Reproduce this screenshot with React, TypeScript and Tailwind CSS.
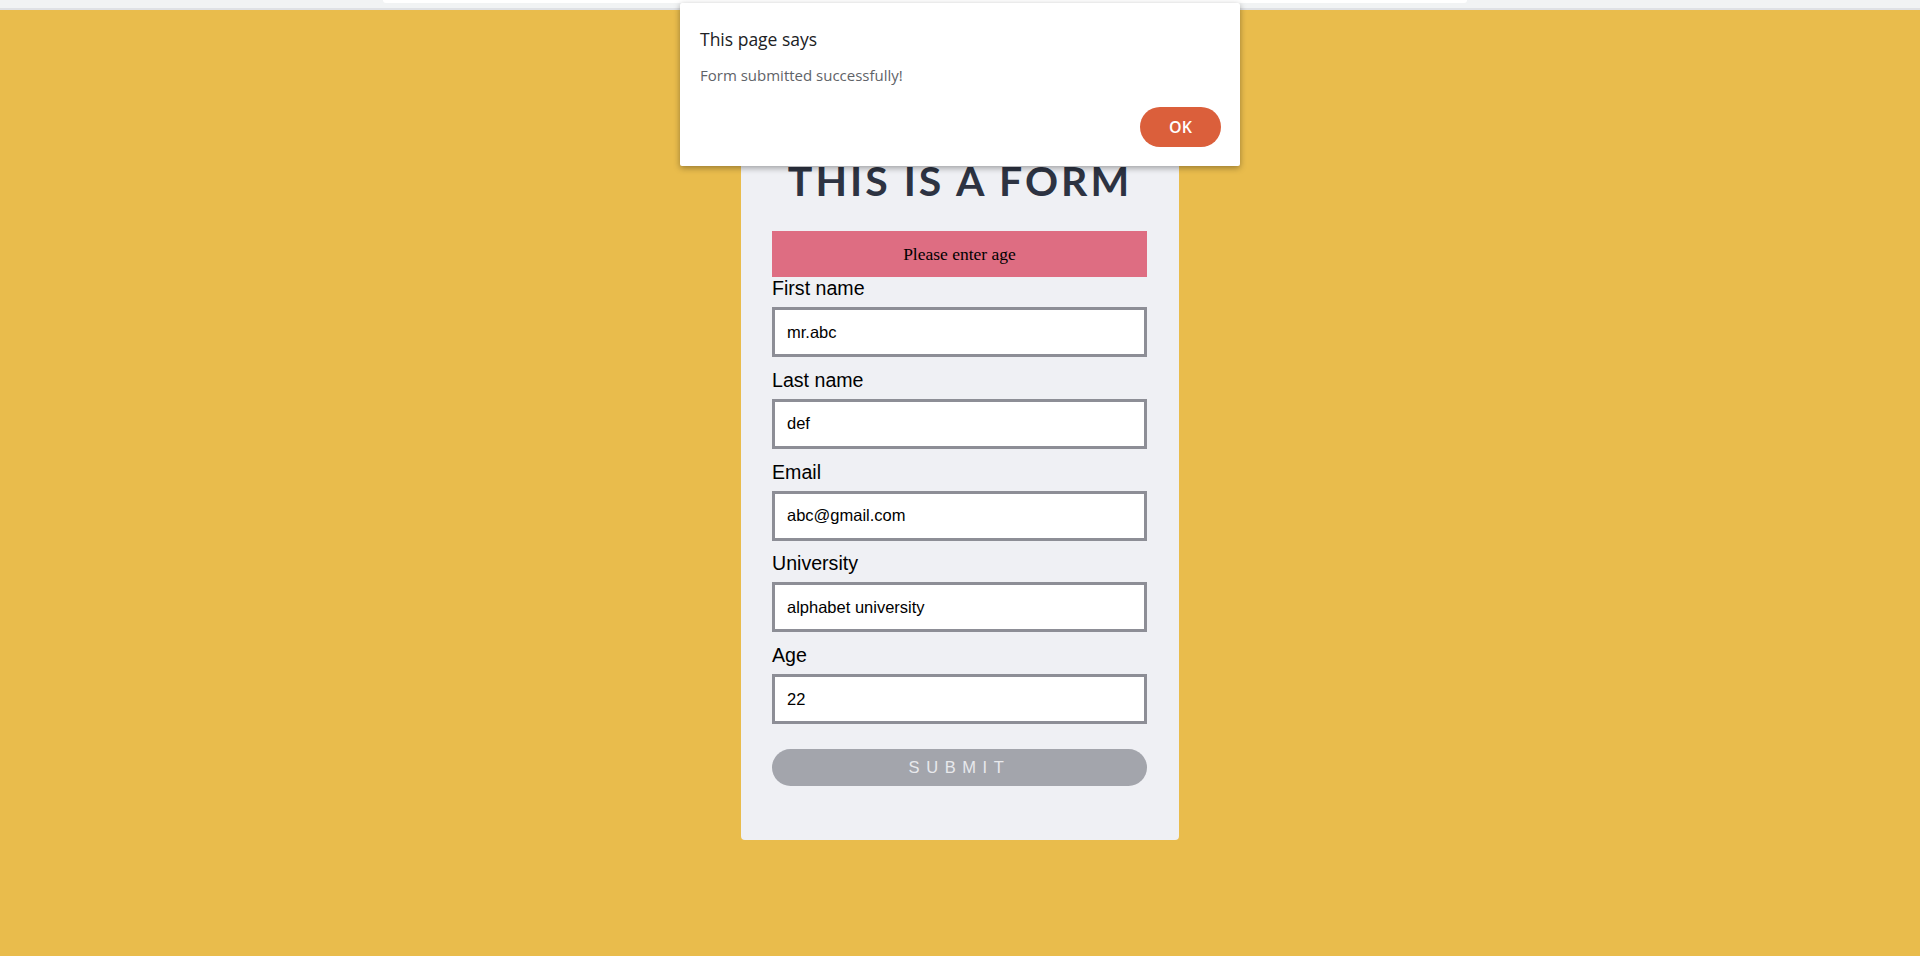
import { useState } from 'react';

interface Field {
  id: string;
  label: string;
  value: string;
}

const fields: Field[] = [
  { id: 'first', label: 'First name', value: 'mr.abc' },
  { id: 'last', label: 'Last name', value: 'def' },
  { id: 'email', label: 'Email', value: 'abc@gmail.com' },
  { id: 'uni', label: 'University', value: 'alphabet university' },
  { id: 'age', label: 'Age', value: '22' },
];

export default function App() {
  const [values, setValues] = useState<Record<string, string>>(
    Object.fromEntries(fields.map((f) => [f.id, f.value]))
  );
  const [showAlert, setShowAlert] = useState(true);

  return (
    <div className="relative min-h-screen w-full flex flex-col bg-[#e9bc4c] font-['Liberation_Sans',Arial,sans-serif]">
      {/* browser strip */}
      <div className="h-[10px] bg-[#f1f3f4] border-b-2 border-[#dfe1e5]">
        <div className="ml-[383px] w-[1084px] h-[3px] bg-white rounded-b-[3px]" />
      </div>

      {/* Form card */}
      <div className="flex justify-center">
        <div className="mt-[100px] w-[438px] bg-[#eff0f4] rounded-[4px] px-[31px] pt-[45px] pb-[54px] flex flex-col">
          <h1 className="text-center font-['Lato',sans-serif] font-bold text-[41px] leading-[52px] tracking-[3px] text-[#2d3342]">
            THIS IS A FORM
          </h1>

          <div className="mt-[24px] h-[46px] w-[375px] bg-[#de6d82] flex items-center justify-center font-['Liberation_Serif','Times_New_Roman',serif] text-[17.5px] text-black pt-[1px]">
            Please enter age
          </div>

          {fields.map((f, i) => (
            <div key={f.id} className={i < fields.length - 1 ? 'mb-[11.75px]' : ''}>
              <label htmlFor={f.id} className="block text-[19.6px] leading-[23px] text-black mb-[7px]">
                {f.label}
              </label>
              <input
                id={f.id}
                type="text"
                value={values[f.id]}
                onChange={(e) => setValues({ ...values, [f.id]: e.target.value })}
                className="block w-[375px] h-[50px] bg-white border-[3px] border-[#8d8e96] pl-[12px] text-[16.5px] text-black outline-none"
              />
            </div>
          ))}

          <button className="mt-[25px] h-[37px] w-[375px] rounded-full bg-[#a3a5ac] text-[#e8e9ec] text-[16.5px] tracking-[0.4em] uppercase">
            Submit
          </button>
        </div>
      </div>

      {/* alert dialog */}
      {showAlert && (
        <div className="absolute left-[680px] top-[3px] w-[560px] h-[163px] bg-white rounded-[2px] shadow-[0_2px_6px_rgba(0,0,0,0.35)] font-['Open_Sans',sans-serif] flex flex-col pl-[20px] pr-[19px] pt-[24px] pb-[19px]">
          <div className="text-[17.5px] leading-[24px] text-[#202124]">This page says</div>
          <div className="mt-[14px] text-[15px] leading-[20px] text-[#5f6368]">Form submitted successfully!</div>
          <div className="mt-auto flex justify-end">
            <button
              onClick={() => setShowAlert(false)}
              className="w-[81px] h-[40px] rounded-full bg-[#db5f3b] text-white text-[16px] font-semibold"
            >
              OK
            </button>
          </div>
        </div>
      )}
    </div>
  );
}
